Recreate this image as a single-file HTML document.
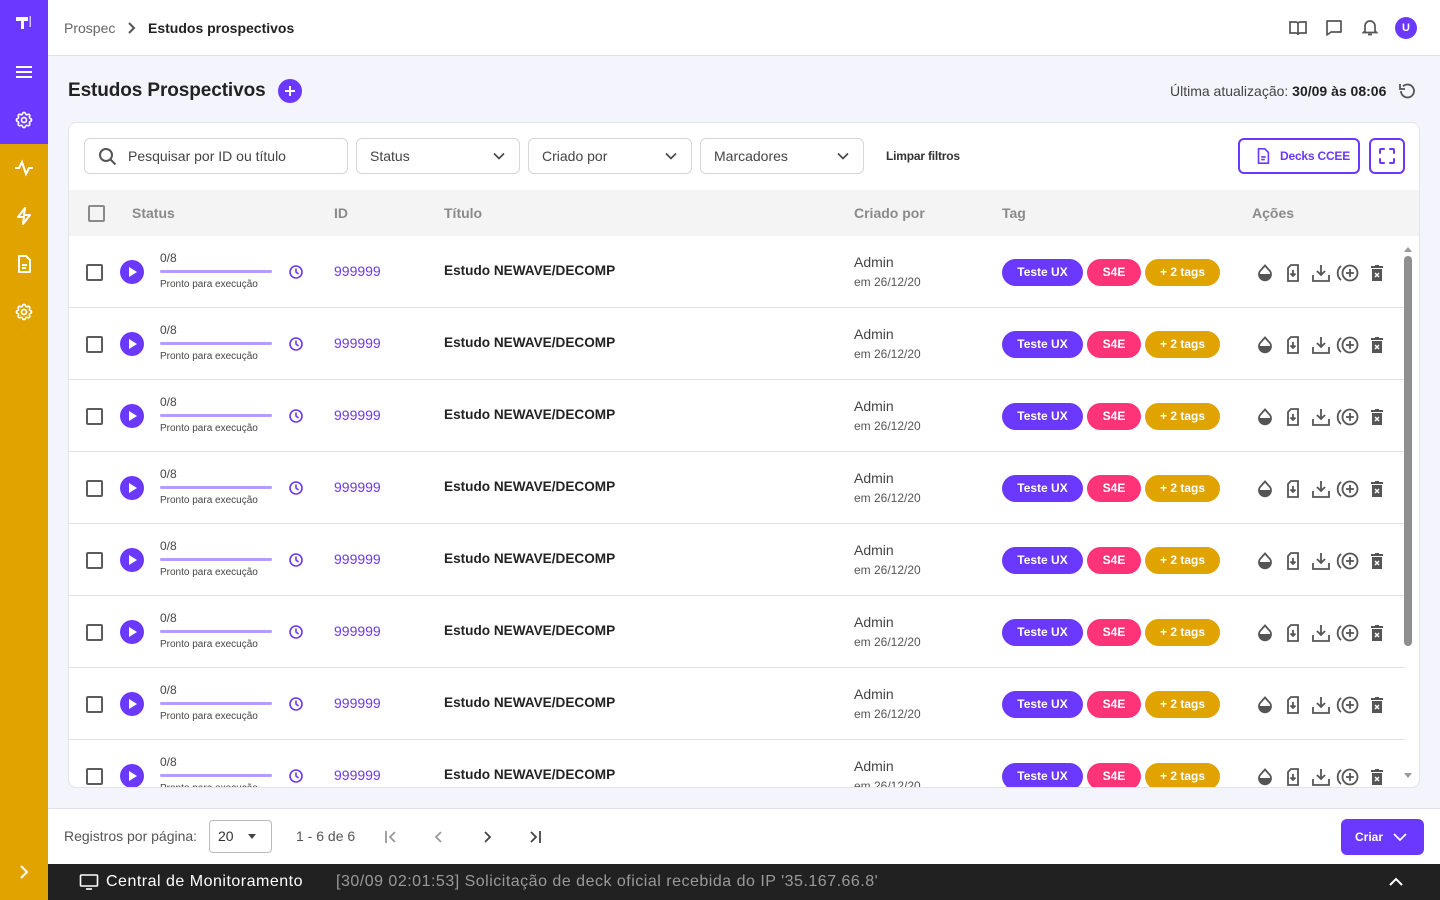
<!DOCTYPE html>
<html><head><meta charset="utf-8">
<style>
*{box-sizing:border-box;margin:0;padding:0}
body{width:1440px;height:900px;overflow:hidden;font-family:"Liberation Sans",Roboto,sans-serif;background:#f4f4fd;position:relative;color:#222}
.abs{position:absolute}
.sb{left:0;top:0;width:48px;height:900px;background:#e0a300}
.sbt{left:0;top:0;width:48px;height:144px;background:#6a38ff}
.ic{position:absolute;left:14px;width:20px;height:20px}
.hdr{left:48px;top:0;width:1392px;height:56px;background:#fff;border-bottom:1px solid #e0e0e6}
.card{left:68px;top:122px;width:1352px;height:666px;background:#fff;border:1px solid #e3e3ea;border-radius:8px;overflow:hidden}
.inp{position:absolute;top:15px;height:36px;border:1px solid #d6d6d6;border-radius:6px;font-size:14px;color:#444;line-height:34px;padding-left:13px}
.inp svg.ch{position:absolute;right:14px;top:10px}
.th{position:absolute;left:0;top:67px;width:1352px;height:46px;background:#f4f4f4;font-size:14px;font-weight:bold;color:#8a8a8a}
.th span{position:absolute;top:15px}
.row{position:absolute;left:0;width:1336px;height:72px;border-bottom:1px solid #e3e3e3}
.cb{position:absolute;left:17px;top:28px;width:17px;height:17px;border:2px solid #5c5c5c;border-radius:2px}
.play{position:absolute;left:51px;top:24px;width:24px;height:24px;border-radius:50%;background:#6a38ff}
.play:after{content:"";position:absolute;left:9px;top:7px;border-left:8px solid #fff;border-top:5px solid transparent;border-bottom:5px solid transparent}
.n{position:absolute;left:91px;top:15px;font-size:12px;color:#444}
.bar{position:absolute;left:91px;top:34px;width:112px;height:3px;border-radius:2px;background:#b39bff}
.pr{position:absolute;left:91px;top:43px;font-size:10px;color:#444}
.clk{position:absolute;left:219px;top:28px}
.id{position:absolute;left:265px;top:27px;font-size:14px;color:#6a38ff}
.tt{position:absolute;left:375px;top:27px;font-size:13.6px;font-weight:bold;color:#222}
.ad{position:absolute;left:785px;top:18px;font-size:14px;color:#444}
.dt{position:absolute;left:785px;top:39px;font-size:12px;color:#555}
.tg{position:absolute;top:23px;height:27px;border-radius:14px;color:#fff;font-size:12px;font-weight:bold;text-align:center;line-height:27px}
.t1{left:933px;width:81px;background:#6a38ff}
.t2{left:1018px;width:54px;background:#ff3378}
.t3{left:1076px;width:75px;background:#e0a300}
.acts{position:absolute;left:1186px;top:27px;height:20px}
.acts svg{position:absolute;top:0}
</style></head><body>
<svg width="0" height="0" style="position:absolute">
<defs>
<symbol id="gear" viewBox="0 0 24 24"><path fill="none" stroke="#fff" stroke-width="2" d="M10.3 4.3c.4-1.8 3-1.8 3.4 0a1.7 1.7 0 0 0 2.6 1.1c1.5-.9 3.3.8 2.4 2.4a1.7 1.7 0 0 0 1 2.5c1.8.4 1.8 3 0 3.4a1.7 1.7 0 0 0-1 2.6c.9 1.5-.9 3.3-2.4 2.4a1.7 1.7 0 0 0-2.6 1c-.4 1.8-3 1.8-3.4 0a1.7 1.7 0 0 0-2.6-1c-1.5.9-3.3-.9-2.4-2.4a1.7 1.7 0 0 0-1-2.6c-1.8-.4-1.8-3 0-3.4a1.7 1.7 0 0 0 1-2.5c-.9-1.6.9-3.3 2.4-2.4a1.7 1.7 0 0 0 2.6-1.1z"/><circle cx="12" cy="12" r="3" fill="none" stroke="#fff" stroke-width="2"/></symbol>
<symbol id="drop" viewBox="0 0 20 20"><path d="M10 2.5 15 8a6 6 0 1 1-10 0z" fill="none" stroke="#555" stroke-width="1.8"/><path d="M4 11h12a6 6 0 0 1-12 0z" fill="#555"/></symbol>
<symbol id="fdl" viewBox="0 0 20 20"><path d="M7 2h7v16H4V5z" fill="none" stroke="#555" stroke-width="1.8" transform="translate(1 0)"/><path d="M10 7v6M7.5 10.5 10 13l2.5-2.5" fill="none" stroke="#555" stroke-width="1.8"/></symbol>
<symbol id="dl" viewBox="0 0 20 20"><path d="M10 2v10M6 8l4 4 4-4M2 12v6h16v-6" fill="none" stroke="#555" stroke-width="1.8"/></symbol>
<symbol id="add" viewBox="0 0 24 20"><path d="M5 3a9 9 0 0 0 0 14" fill="none" stroke="#555" stroke-width="1.8"/><circle cx="14" cy="10" r="7.5" fill="none" stroke="#555" stroke-width="1.8"/><path d="M14 6v8M10 10h8" stroke="#555" stroke-width="1.8"/></symbol>
<symbol id="trash" viewBox="0 0 20 20"><path d="M4 3h12v2H4zM8 2h4v1H8z" fill="#555"/><path d="M5 6h10v12H5z" fill="#555"/><path d="M8 10l4 4M12 10l-4 4" stroke="#fff" stroke-width="1.5"/></symbol>
<symbol id="clock" viewBox="0 0 16 16"><circle cx="8" cy="8" r="6" fill="none" stroke="#6a38ff" stroke-width="1.6"/><path d="M8 4.5V8l2.5 2" fill="none" stroke="#6a38ff" stroke-width="1.6"/></symbol>
<symbol id="chev" viewBox="0 0 12 8"><path d="M1 1.5 6 6.5 11 1.5" fill="none" stroke="#444" stroke-width="1.6"/></symbol>
</defs></svg>

<div class="abs sb"></div><div class="abs sbt"></div>
<svg class="ic" style="top:13px" viewBox="0 0 20 20"><path d="M2 4h12v4H10v8H7V8H2z" fill="#fff"/><path d="M15.5 3h1.5v11h-1.5z" fill="#fff" opacity=".7"/></svg>
<svg class="ic" style="top:62px" viewBox="0 0 20 20"><path d="M2 5h16M2 10h16M2 15h16" stroke="#fff" stroke-width="2"/></svg>
<svg class="ic" style="top:110px"><use href="#gear"/></svg>
<svg class="ic" style="top:158px" viewBox="0 0 20 20"><path d="M1 10h4l3-6 4 12 3-6h4" fill="none" stroke="#fff" stroke-width="2"/></svg>
<svg class="ic" style="top:206px" viewBox="0 0 20 20"><path d="M11 2 4 11h6l-1 7 7-9h-6z" fill="none" stroke="#fff" stroke-width="2" stroke-linejoin="round"/></svg>
<svg class="ic" style="top:254px" viewBox="0 0 20 20"><path d="M5 2h7l4 4v12H5z" fill="none" stroke="#fff" stroke-width="2" stroke-linejoin="round"/><path d="M8 11h5M8 14h4" stroke="#fff" stroke-width="2"/></svg>
<svg class="ic" style="top:302px"><use href="#gear"/></svg>
<svg class="ic" style="top:862px" viewBox="0 0 20 20"><path d="M7 4l6 6-6 6" fill="none" stroke="#fff" stroke-width="2"/></svg>

<div class="abs hdr">
 <div class="abs" style="left:16px;top:20px;font-size:14px;color:#666">Prospec</div>
 <svg class="abs" style="left:78px;top:22px" width="10" height="12" viewBox="0 0 10 12"><path d="M3 1l5 5-5 5" fill="none" stroke="#555" stroke-width="2"/></svg>
 <div class="abs" style="left:100px;top:20px;font-size:14px;font-weight:bold;color:#222">Estudos prospectivos</div>
 <svg class="abs" style="left:1240px;top:18px" width="20" height="20" viewBox="0 0 20 20"><path d="M2 4h6a2 2 0 0 1 2 2v11a2 2 0 0 0-2-2H2zM18 4h-6a2 2 0 0 0-2 2v11a2 2 0 0 1 2-2h6z" fill="none" stroke="#555" stroke-width="1.7"/></svg>
 <svg class="abs" style="left:1276px;top:18px" width="20" height="20" viewBox="0 0 20 20"><path d="M3 3h14v11H7l-4 3z" fill="none" stroke="#555" stroke-width="1.7" stroke-linejoin="round"/></svg>
 <svg class="abs" style="left:1312px;top:17px" width="20" height="20" viewBox="0 0 20 20"><path d="M5 14V9a5 5 0 0 1 10 0v5l1.5 1.5h-13zM8 17.5h4" fill="none" stroke="#555" stroke-width="1.7"/></svg>
 <div class="abs" style="left:1347px;top:17px;width:22px;height:22px;border-radius:50%;background:#6a38ff;color:#fff;font-size:11px;font-weight:bold;text-align:center;line-height:22px">U</div>
</div>

<div class="abs" style="left:68px;top:80px;font-size:19px;font-weight:bold;color:#222;letter-spacing:-0.1px">Estudos Prospectivos</div>
<div class="abs" style="left:278px;top:79px;width:24px;height:24px;border-radius:50%;background:#6a38ff"><svg width="24" height="24"><path d="M12 7v10M7 12h10" stroke="#fff" stroke-width="2"/></svg></div>
<div class="abs" style="left:1170px;top:83px;font-size:14px;color:#444">Última atualização: <b style="color:#222">30/09 às 08:06</b></div>
<svg class="abs" style="left:1397px;top:81px" width="20" height="20" viewBox="0 0 20 20"><path d="M4 10a6.5 6.5 0 1 0 2-4.7" fill="none" stroke="#555" stroke-width="1.8"/><path d="M3 3v5h5" fill="none" stroke="#555" stroke-width="1.8"/></svg>

<div class="abs card">
 <div class="inp" style="left:15px;width:264px;padding-left:43px"><svg class="abs" style="left:13px;top:8px" width="20" height="20" viewBox="0 0 20 20"><circle cx="8" cy="8" r="6" fill="none" stroke="#555" stroke-width="2"/><path d="M12.5 12.5l5 5" stroke="#555" stroke-width="2"/></svg>Pesquisar por ID ou título</div>
 <div class="inp" style="left:287px;width:164px">Status<svg class="ch" width="12" height="14"><use href="#chev"/></svg></div>
 <div class="inp" style="left:459px;width:164px">Criado por<svg class="ch" width="12" height="14"><use href="#chev"/></svg></div>
 <div class="inp" style="left:631px;width:164px">Marcadores<svg class="ch" width="12" height="14"><use href="#chev"/></svg></div>
 <div class="abs" style="left:817px;top:26px;font-size:12px;font-weight:bold;color:#333;letter-spacing:-0.2px">Limpar filtros</div>
 <div class="abs" style="left:1169px;top:15px;width:122px;height:36px;border:2px solid #6a38ff;border-radius:6px;color:#6a38ff;font-size:12px;font-weight:bold;line-height:32px;padding-left:40px;letter-spacing:-0.2px"><svg class="abs" style="left:14px;top:7px" width="18" height="18" viewBox="0 0 20 20"><path d="M5 2h7l4 4v12H5z" fill="none" stroke="#6a38ff" stroke-width="1.8" stroke-linejoin="round"/><path d="M8 11h5M8 14h4" stroke="#6a38ff" stroke-width="1.8"/></svg>Decks CCEE</div>
 <div class="abs" style="left:1300px;top:15px;width:36px;height:36px;border:2px solid #6a38ff;border-radius:6px"><svg width="32" height="32" viewBox="0 0 32 32"><path d="M9 13V10a1 1 0 0 1 1-1h3M19 9h3a1 1 0 0 1 1 1v3M23 19v3a1 1 0 0 1-1 1h-3M13 23h-3a1 1 0 0 1-1-1v-3" fill="none" stroke="#6a38ff" stroke-width="2" stroke-linecap="round"/></svg></div>
 <div class="th"><div class="abs" style="left:19px;top:15px;width:17px;height:17px;border:2px solid #8a8a8a;border-radius:2px"></div><span style="left:63px">Status</span><span style="left:265px">ID</span><span style="left:375px">Título</span><span style="left:785px">Criado por</span><span style="left:933px">Tag</span><span style="left:1183px">Ações</span></div>

 <div class="row" style="top:113px"><div class="cb"></div><div class="play"></div><div class="n">0/8</div><div class="bar"></div><div class="pr">Pronto para execução</div><svg class="clk" width="16" height="16"><use href="#clock"/></svg><div class="id">999999</div><div class="tt">Estudo NEWAVE/DECOMP</div><div class="ad">Admin</div><div class="dt">em 26/12/20</div><div class="tg t1">Teste UX</div><div class="tg t2">S4E</div><div class="tg t3">+ 2 tags</div><div class="acts"><svg style="left:0" width="20" height="20"><use href="#drop"/></svg><svg style="left:28px" width="20" height="20"><use href="#fdl"/></svg><svg style="left:56px" width="20" height="20"><use href="#dl"/></svg><svg style="left:81px" width="24" height="20"><use href="#add"/></svg><svg style="left:112px" width="20" height="20"><use href="#trash"/></svg></div></div>
 <div class="row" style="top:185px"><div class="cb"></div><div class="play"></div><div class="n">0/8</div><div class="bar"></div><div class="pr">Pronto para execução</div><svg class="clk" width="16" height="16"><use href="#clock"/></svg><div class="id">999999</div><div class="tt">Estudo NEWAVE/DECOMP</div><div class="ad">Admin</div><div class="dt">em 26/12/20</div><div class="tg t1">Teste UX</div><div class="tg t2">S4E</div><div class="tg t3">+ 2 tags</div><div class="acts"><svg style="left:0" width="20" height="20"><use href="#drop"/></svg><svg style="left:28px" width="20" height="20"><use href="#fdl"/></svg><svg style="left:56px" width="20" height="20"><use href="#dl"/></svg><svg style="left:81px" width="24" height="20"><use href="#add"/></svg><svg style="left:112px" width="20" height="20"><use href="#trash"/></svg></div></div>
 <div class="row" style="top:257px"><div class="cb"></div><div class="play"></div><div class="n">0/8</div><div class="bar"></div><div class="pr">Pronto para execução</div><svg class="clk" width="16" height="16"><use href="#clock"/></svg><div class="id">999999</div><div class="tt">Estudo NEWAVE/DECOMP</div><div class="ad">Admin</div><div class="dt">em 26/12/20</div><div class="tg t1">Teste UX</div><div class="tg t2">S4E</div><div class="tg t3">+ 2 tags</div><div class="acts"><svg style="left:0" width="20" height="20"><use href="#drop"/></svg><svg style="left:28px" width="20" height="20"><use href="#fdl"/></svg><svg style="left:56px" width="20" height="20"><use href="#dl"/></svg><svg style="left:81px" width="24" height="20"><use href="#add"/></svg><svg style="left:112px" width="20" height="20"><use href="#trash"/></svg></div></div>
 <div class="row" style="top:329px"><div class="cb"></div><div class="play"></div><div class="n">0/8</div><div class="bar"></div><div class="pr">Pronto para execução</div><svg class="clk" width="16" height="16"><use href="#clock"/></svg><div class="id">999999</div><div class="tt">Estudo NEWAVE/DECOMP</div><div class="ad">Admin</div><div class="dt">em 26/12/20</div><div class="tg t1">Teste UX</div><div class="tg t2">S4E</div><div class="tg t3">+ 2 tags</div><div class="acts"><svg style="left:0" width="20" height="20"><use href="#drop"/></svg><svg style="left:28px" width="20" height="20"><use href="#fdl"/></svg><svg style="left:56px" width="20" height="20"><use href="#dl"/></svg><svg style="left:81px" width="24" height="20"><use href="#add"/></svg><svg style="left:112px" width="20" height="20"><use href="#trash"/></svg></div></div>
 <div class="row" style="top:401px"><div class="cb"></div><div class="play"></div><div class="n">0/8</div><div class="bar"></div><div class="pr">Pronto para execução</div><svg class="clk" width="16" height="16"><use href="#clock"/></svg><div class="id">999999</div><div class="tt">Estudo NEWAVE/DECOMP</div><div class="ad">Admin</div><div class="dt">em 26/12/20</div><div class="tg t1">Teste UX</div><div class="tg t2">S4E</div><div class="tg t3">+ 2 tags</div><div class="acts"><svg style="left:0" width="20" height="20"><use href="#drop"/></svg><svg style="left:28px" width="20" height="20"><use href="#fdl"/></svg><svg style="left:56px" width="20" height="20"><use href="#dl"/></svg><svg style="left:81px" width="24" height="20"><use href="#add"/></svg><svg style="left:112px" width="20" height="20"><use href="#trash"/></svg></div></div>
 <div class="row" style="top:473px"><div class="cb"></div><div class="play"></div><div class="n">0/8</div><div class="bar"></div><div class="pr">Pronto para execução</div><svg class="clk" width="16" height="16"><use href="#clock"/></svg><div class="id">999999</div><div class="tt">Estudo NEWAVE/DECOMP</div><div class="ad">Admin</div><div class="dt">em 26/12/20</div><div class="tg t1">Teste UX</div><div class="tg t2">S4E</div><div class="tg t3">+ 2 tags</div><div class="acts"><svg style="left:0" width="20" height="20"><use href="#drop"/></svg><svg style="left:28px" width="20" height="20"><use href="#fdl"/></svg><svg style="left:56px" width="20" height="20"><use href="#dl"/></svg><svg style="left:81px" width="24" height="20"><use href="#add"/></svg><svg style="left:112px" width="20" height="20"><use href="#trash"/></svg></div></div>
 <div class="row" style="top:545px"><div class="cb"></div><div class="play"></div><div class="n">0/8</div><div class="bar"></div><div class="pr">Pronto para execução</div><svg class="clk" width="16" height="16"><use href="#clock"/></svg><div class="id">999999</div><div class="tt">Estudo NEWAVE/DECOMP</div><div class="ad">Admin</div><div class="dt">em 26/12/20</div><div class="tg t1">Teste UX</div><div class="tg t2">S4E</div><div class="tg t3">+ 2 tags</div><div class="acts"><svg style="left:0" width="20" height="20"><use href="#drop"/></svg><svg style="left:28px" width="20" height="20"><use href="#fdl"/></svg><svg style="left:56px" width="20" height="20"><use href="#dl"/></svg><svg style="left:81px" width="24" height="20"><use href="#add"/></svg><svg style="left:112px" width="20" height="20"><use href="#trash"/></svg></div></div>
 <div class="row" style="top:617px"><div class="cb"></div><div class="play"></div><div class="n">0/8</div><div class="bar"></div><div class="pr">Pronto para execução</div><svg class="clk" width="16" height="16"><use href="#clock"/></svg><div class="id">999999</div><div class="tt">Estudo NEWAVE/DECOMP</div><div class="ad">Admin</div><div class="dt">em 26/12/20</div><div class="tg t1">Teste UX</div><div class="tg t2">S4E</div><div class="tg t3">+ 2 tags</div><div class="acts"><svg style="left:0" width="20" height="20"><use href="#drop"/></svg><svg style="left:28px" width="20" height="20"><use href="#fdl"/></svg><svg style="left:56px" width="20" height="20"><use href="#dl"/></svg><svg style="left:81px" width="24" height="20"><use href="#add"/></svg><svg style="left:112px" width="20" height="20"><use href="#trash"/></svg></div></div>

 <div class="abs" style="left:1335px;top:124px;border-left:4px solid transparent;border-right:4px solid transparent;border-bottom:5px solid #999"></div>
 <div class="abs" style="left:1335px;top:133px;width:8px;height:390px;border-radius:4px;background:#8f8f8f"></div>
 <div class="abs" style="left:1335px;top:650px;border-left:4px solid transparent;border-right:4px solid transparent;border-top:5px solid #999"></div>
</div>

<div class="abs" style="left:48px;top:808px;width:1392px;height:56px;background:#fff;border-top:1px solid #e0e0e6">
 <div class="abs" style="left:16px;top:19px;font-size:14px;color:#555">Registros por página:</div>
 <div class="abs" style="left:161px;top:11px;width:63px;height:33px;border:1px solid #bbb;border-radius:4px;font-size:14px;color:#333;line-height:31px;padding-left:8px">20<div class="abs" style="left:38px;top:13px;border-left:4px solid transparent;border-right:4px solid transparent;border-top:5px solid #444"></div></div>
 <div class="abs" style="left:248px;top:19px;font-size:14px;color:#555">1 - 6 de 6</div>
 <svg class="abs" style="left:335px;top:19px" width="16" height="18" viewBox="0 0 16 18"><path d="M3 3v12M12 4l-5 5 5 5" fill="none" stroke="#999" stroke-width="1.8"/></svg>
 <svg class="abs" style="left:383px;top:19px" width="16" height="18" viewBox="0 0 16 18"><path d="M10 4l-5 5 5 5" fill="none" stroke="#999" stroke-width="1.8"/></svg>
 <svg class="abs" style="left:431px;top:19px" width="16" height="18" viewBox="0 0 16 18"><path d="M6 4l5 5-5 5" fill="none" stroke="#444" stroke-width="1.8"/></svg>
 <svg class="abs" style="left:479px;top:19px" width="16" height="18" viewBox="0 0 16 18"><path d="M4 4l5 5-5 5M13 3v12" fill="none" stroke="#444" stroke-width="1.8"/></svg>
 <div class="abs" style="left:1293px;top:10px;width:83px;height:36px;border-radius:6px;background:#6a38ff;color:#fff;font-size:12px;font-weight:bold;line-height:36px;padding-left:14px">Criar<svg class="abs" style="left:52px;top:13px" width="14" height="10" viewBox="0 0 14 10"><path d="M1 2l6 6 6-6" fill="none" stroke="#fff" stroke-width="1.8"/></svg></div>
</div>

<div class="abs" style="left:48px;top:864px;width:1392px;height:36px;background:#212121">
 <svg class="abs" style="left:31px;top:9px" width="20" height="18" viewBox="0 0 20 18"><rect x="1.5" y="2" width="17" height="11" rx="1" fill="none" stroke="#fff" stroke-width="1.6"/><path d="M7 16h6" stroke="#fff" stroke-width="1.6"/></svg>
 <div class="abs" style="left:58px;top:9px;font-size:16px;color:#fff;letter-spacing:0.5px">Central de Monitoramento</div>
 <div class="abs" style="left:288px;top:9px;font-size:16px;color:#9a9a9a;letter-spacing:0.5px">[30/09 02:01:53] Solicitação de deck oficial recebida do IP '35.167.66.8'</div>
 <svg class="abs" style="left:1340px;top:12px" width="16" height="12" viewBox="0 0 16 12"><path d="M2 9l6-6 6 6" fill="none" stroke="#fff" stroke-width="2"/></svg>
</div>
</body></html>
